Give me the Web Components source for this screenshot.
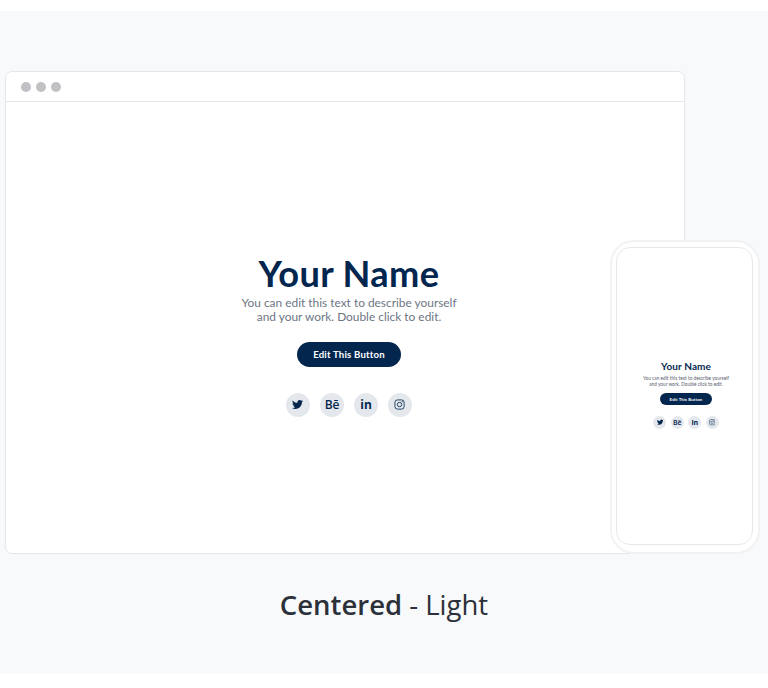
<!DOCTYPE html>
<html>
<head>
<meta charset="utf-8">
<title>Centered - Light</title>
<style>
  html, body { margin: 0; background: #fff; }
  b { font-weight: 600; }
</style>
</head>
<body>
<template-card>
  <browser-frame>
    <site-hero style="--title:36.2px;--text:11.9px;--leading:14px;--title-gap:2px;--btn-w:104px;--btn-h:25px;--btn-font:9.6px;--btn-top:18px;--icons-top:26px;--icon:24px;--icon-gap:10px;--glyph:12px;--tone:#6d7684"></site-hero>
  </browser-frame>
  <phone-frame slot="phone">
    <site-hero style="--title:10px;--text:4.75px;--leading:6px;--title-gap:3px;--btn-w:52px;--btn-h:12px;--btn-font:4.4px;--btn-top:6px;--icons-top:11px;--icon:13px;--icon-gap:4.5px;--glyph:7px;--tone:#59616e"></site-hero>
  </phone-frame>
  <span slot="label"><b>Centered</b> - Light</span>
</template-card>

<script>
class TemplateCard extends HTMLElement {
    constructor() {
        super();
        this.attachShadow({ mode: 'open' });
    }

    connectedCallback() {
        this.shadowRoot.innerHTML = `
            <style>
                :host {
                    display: block;
                    margin-top: 11px;
                    height: 663px;
                    background: #f7f9fb;
                    padding: 60px 0 0 5px;
                    box-sizing: border-box;
                }
                .stage {
                    position: relative;
                    width: 680px;
                }
                /* the phone sits over the corner of the browser window */
                .phone {
                    position: absolute;
                    left: 605px;
                    top: 169px;
                }
                .label {
                    margin: 32px 0 0 -5px;
                    width: 768px;
                    text-align: center;
                    font-family: "Open Sans", "Noto Sans", sans-serif;
                    font-size: 27.5px;
                    line-height: 38px;
                    color: #2c3038;
                }
            </style>
            <div class="stage">
                <slot></slot>
                <div class="phone"><slot name="phone"></slot></div>
            </div>
            <div class="label"><slot name="label"></slot></div>
        `;
    }
}

class BrowserFrame extends HTMLElement {
    constructor() {
        super();
        this.attachShadow({ mode: 'open' });
    }

    connectedCallback() {
        this.shadowRoot.innerHTML = `
            <style>
                :host {
                    display: block;
                    width: 680px;
                    height: 483px;
                    box-sizing: border-box;
                    background: #fff;
                    border: 1px solid #e4e6ea;
                    border-radius: 7px;
                }
                .bar {
                    display: flex;
                    align-items: center;
                    gap: 5px;
                    height: 29px;
                    padding-left: 15px;
                    border-bottom: 1px solid #e4e6ea;
                }
                .dot {
                    width: 10px;
                    height: 10px;
                    border-radius: 50%;
                    background: #c0c1c4;
                }
                .body {
                    display: flex;
                    justify-content: center;
                    padding: 152px 0 0 8px;
                }
            </style>
            <div class="bar">
                <span class="dot"></span><span class="dot"></span><span class="dot"></span>
            </div>
            <div class="body"><slot></slot></div>
        `;
    }
}

class PhoneFrame extends HTMLElement {
    constructor() {
        super();
        this.attachShadow({ mode: 'open' });
    }

    connectedCallback() {
        this.shadowRoot.innerHTML = `
            <style>
                :host {
                    display: block;
                    width: 150px;
                    height: 314px;
                    box-sizing: border-box;
                    padding: 5px 5px 7px 4px;
                    background: #fff;
                    border: 2px solid #f0f2f4;
                    border-radius: 24px;
                }
                .screen {
                    display: flex;
                    justify-content: center;
                    height: 100%;
                    box-sizing: border-box;
                    padding: 113px 0 0 3px;
                    border: 1px solid #e6e8eb;
                    border-radius: 14px;
                }
            </style>
            <div class="screen"><slot></slot></div>
        `;
    }
}

class SiteHero extends HTMLElement {
    constructor() {
        super();
        this.attachShadow({ mode: 'open' });
    }

    connectedCallback() {
        this.shadowRoot.innerHTML = `
            <style>
                :host {
                    display: flex;
                    flex-direction: column;
                    align-items: center;
                    font-family: "Lato", "Open Sans", sans-serif;
                    color: #03264f;
                }
                h1 {
                    margin: 0;
                    font-size: var(--title);
                    line-height: 1.1;
                    font-weight: 700;
                    letter-spacing: 0.01em;
                    white-space: nowrap;
                }
                p {
                    margin: var(--title-gap) 0 0;
                    font-size: var(--text);
                    line-height: var(--leading);
                    color: var(--tone);
                    text-align: center;
                    white-space: nowrap;
                }
                .btn {
                    display: flex;
                    align-items: center;
                    justify-content: center;
                    width: var(--btn-w);
                    height: var(--btn-h);
                    margin-top: var(--btn-top);
                    border-radius: 999px;
                    background: #03264f;
                    color: #fff;
                    font-size: var(--btn-font);
                    font-weight: 700;
                    letter-spacing: 0.02em;
                }
                .social {
                    display: flex;
                    gap: var(--icon-gap);
                    margin-top: var(--icons-top);
                }
                .social span {
                    display: flex;
                    align-items: center;
                    justify-content: center;
                    width: var(--icon);
                    height: var(--icon);
                    border-radius: 50%;
                    background: #e4e8ec;
                    font-family: "Open Sans", sans-serif;
                    font-size: var(--glyph);
                    font-weight: 700;
                    line-height: 1;
                }
                svg {
                    width: calc(var(--glyph) * 0.92);
                    height: calc(var(--glyph) * 0.92);
                    display: block;
                }
            </style>
            <h1>Your Name</h1>
            <p>You can edit this text to describe yourself<br>and your work. Double click to edit.</p>
            <div class="btn">Edit This Button</div>
            <div class="social">
                <span>
                    <svg viewBox="0 0 24 24" fill="currentColor"><path d="M23.953 4.57a10 10 0 01-2.825.775 4.958 4.958 0 002.163-2.723c-.951.555-2.005.959-3.127 1.184a4.92 4.92 0 00-8.384 4.482C7.69 8.095 4.067 6.13 1.64 3.162a4.822 4.822 0 00-.666 2.475c0 1.71.87 3.213 2.188 4.096a4.904 4.904 0 01-2.228-.616v.06a4.923 4.923 0 003.946 4.827 4.996 4.996 0 01-2.212.085 4.936 4.936 0 004.604 3.417 9.867 9.867 0 01-6.102 2.105c-.39 0-.779-.023-1.17-.067a13.995 13.995 0 007.557 2.209c9.053 0 13.998-7.496 13.998-13.985 0-.21 0-.42-.015-.63A9.935 9.935 0 0024 4.59z"/></svg>
                </span>
                <span style="font-weight:600;letter-spacing:-0.02em">Bē</span>
                <span>in</span>
                <span>
                    <svg viewBox="0 0 24 24" fill="none" stroke="currentColor" stroke-width="1.8"><rect x="2" y="2" width="20" height="20" rx="5.5"/><circle cx="12" cy="12" r="4.8"/><circle cx="17.8" cy="6.2" r="0.6" fill="currentColor" stroke-width="1"/></svg>
                </span>
            </div>
        `;
    }
}

customElements.define('template-card', TemplateCard);
customElements.define('browser-frame', BrowserFrame);
customElements.define('phone-frame', PhoneFrame);
customElements.define('site-hero', SiteHero);
</script>
</body>
</html>
